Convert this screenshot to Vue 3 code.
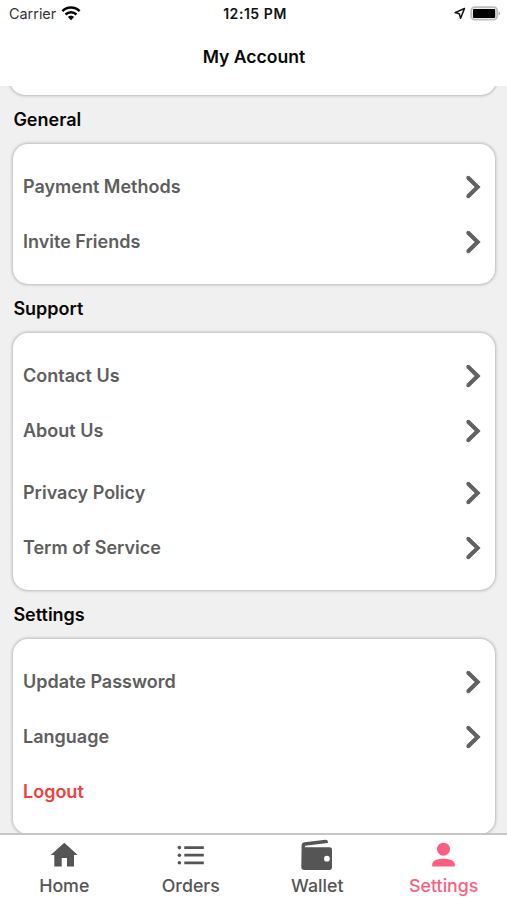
<script setup>
const sections = [
  { title: 'General', groups: [['Payment Methods', 'Invite Friends']] },
  { title: 'Support', groups: [['Contact Us', 'About Us'], ['Privacy Policy', 'Term of Service']] },
  { title: 'Settings', groups: [['Update Password', 'Language', 'Logout']] },
]
const tabs = ['Home', 'Orders', 'Wallet', 'Settings']
</script>

<template>
  <div class="screen">
    <header class="header">
      <div class="status">
        <div class="carrier">
          <span>Carrier</span>
          <svg width="20" height="15" viewBox="0 0 20 15" fill="none" stroke="#000" stroke-width="2.5">
            <path d="M1.4 5.2C6.2.3 13.8.3 18.6 5.2" />
            <path d="M4.5 8.5C7.6 5.5 12.4 5.5 15.5 8.5" />
            <path d="M6.9 11.1C8.5 9.2 11.5 9.2 13.1 11.1L10 14.3z" fill="#000" stroke="none" />
          </svg>
        </div>
        <div class="clock">12:15 PM</div>
        <div class="indicators">
          <svg width="13" height="13" viewBox="0 0 13 13" fill="none" stroke="#111" stroke-width="1.5" stroke-linejoin="round">
            <path d="M11.5 1.5L2 5.6L6.3 6.7L7.6 11.2z" />
          </svg>
          <svg width="31" height="15" viewBox="0 0 31 15">
            <rect x="1.2" y="1.2" width="26" height="12.4" rx="3.6" fill="#eee" stroke="#bdbdbd" stroke-width="1.8" />
            <rect x="3" y="2.9" width="22.2" height="9" rx="1" />
            <path d="M28.6 5.2C30.6 6 30.6 8.8 28.6 9.6z" fill="#b0b0b0" />
          </svg>
        </div>
      </div>
      <h1>My Account</h1>
    </header>

    <main class="content">
      <div class="card previous"></div>
      <section v-for="section in sections" :key="section.title">
        <h2>{{ section.title }}</h2>
        <div class="card">
          <div v-for="(group, i) in section.groups" :key="i" class="group">
            <div v-for="item in group" :key="item" class="row" :class="{ logout: item === 'Logout' }">
              <span>{{ item }}</span>
              <svg v-if="item !== 'Logout'" width="16" height="24" viewBox="0 0 16 24" fill="none" stroke="#626262" stroke-width="4">
                <path d="M2.9 2.5L12.7 12L2.9 21.5" stroke-linecap="butt" />
                <path d="M2.9 2.5L12.7 12L2.9 21.5" stroke-width="3.2" stroke-linecap="round" />
              </svg>
            </div>
          </div>
        </div>
      </section>
    </main>

    <nav class="tabs">
      <div v-for="tab in tabs" :key="tab + '-tab'" class="tab" :class="{ active: tab === 'Settings' }">
        <svg width="34" height="34" viewBox="0 0 34 34" fill="currentColor">
          <path v-if="tab === 'Home'" d="M17.3 4.8L30.7 17H27V28.6H20V20H14.7V28.6H7.3V17H3.7z" />
          <g v-else-if="tab === 'Orders'">
            <circle cx="5.4" cy="9.6" r="1.8" />
            <circle cx="5.4" cy="17.2" r="1.8" />
            <circle cx="5.4" cy="24.8" r="1.8" />
            <path d="M10.3 8.2h19.5v2.8H10.3zM10.3 15.8h19.5v2.8H10.3zM10.3 23.4h19.5v2.8H10.3z" />
          </g>
          <g v-else-if="tab === 'Wallet'">
            <path d="M1.6 7.7Q1.6 4.8 4.5 4.3L25.5 1.7Q27.5 1.5 27.9 3.5V5L5 7.8V9.3H29.5Q32 9.3 32 11.8V29.3Q32 32 29.3 32H4.3Q1.3 32 1.3 29.3z" />
            <circle cx="26.9" cy="20.7" r="2.9" fill="#fff" />
          </g>
          <g v-else>
            <circle cx="16.5" cy="11.2" r="6.5" />
            <path d="M5.2 28.5V26.2C5.2 22.6 11 20.8 16.5 20.8S27.8 22.6 27.8 26.2V28.5z" />
          </g>
        </svg>
        <span>{{ tab }}</span>
      </div>
    </nav>
  </div>
</template>

<style>
body {
  margin: 0;
}
</style>

<style scoped>
.screen {
  width: 507px;
  height: 900px;
  display: flex;
  flex-direction: column;
  overflow: hidden;
  background: #f0f0f0;
  font-family: Inter, "Liberation Sans", sans-serif;
}
.header {
  height: 86px;
  flex: none;
  background: #fff;
}
.status {
  height: 27px;
  display: grid;
  grid-template-columns: 1fr auto 1fr;
  align-items: center;
  padding: 0 6px 0 9px;
  font-size: 14.4px;
  color: #111;
}
.carrier {
  display: flex;
  align-items: center;
  gap: 5px;
}
.carrier span {
  color: #333;
}
.clock {
  font-weight: 600;
  font-size: 14px;
  letter-spacing: 0.55px;
}
.indicators {
  display: flex;
  align-items: center;
  justify-content: flex-end;
  gap: 4px;
}
h1 {
  margin: 19px 0 0;
  padding-left: 1px;
  text-align: center;
  font-size: 17.6px;
  line-height: 22px;
  font-weight: 600;
  color: #080808;
}
.content {
  flex: 1;
  min-height: 0;
  overflow: hidden;
  padding: 0 12px 0 13px;
}
.card {
  box-sizing: border-box;
  background: #fff;
  border-radius: 15px;
  box-shadow: 0 0 3px 1px rgba(0, 0, 0, 0.23);
  padding: 15px 14px 15px 10px;
}
.previous {
  height: 40px;
  margin: -31px -1px 0 -3px;
}
h2 {
  margin: 0;
  padding-left: 0.4px;
  height: 49px;
  line-height: 49px;
  font-size: 18px;
  font-weight: 600;
  color: #080808;
}
.group + .group {
  margin-top: 7px;
}
.row {
  height: 55px;
  display: flex;
  align-items: center;
  justify-content: space-between;
  font-size: 18px;
  font-weight: 600;
  color: #5e5e5e;
}
.logout {
  color: #f0403c;
}
.tabs {
  box-sizing: border-box;
  height: 67px;
  flex: none;
  display: grid;
  grid-template-columns: repeat(4, 1fr);
  padding-left: 1px;
  border-top: 2px solid #c6c6c6;
  background: #fff;
}
.tab {
  display: flex;
  flex-direction: column;
  align-items: center;
  padding-top: 3px;
  color: #555;
  font-size: 17.8px;
  font-weight: 500;
  line-height: 28px;
}
.tab svg {
  flex: none;
}
.active {
  color: #fc5f82;
}
</style>
